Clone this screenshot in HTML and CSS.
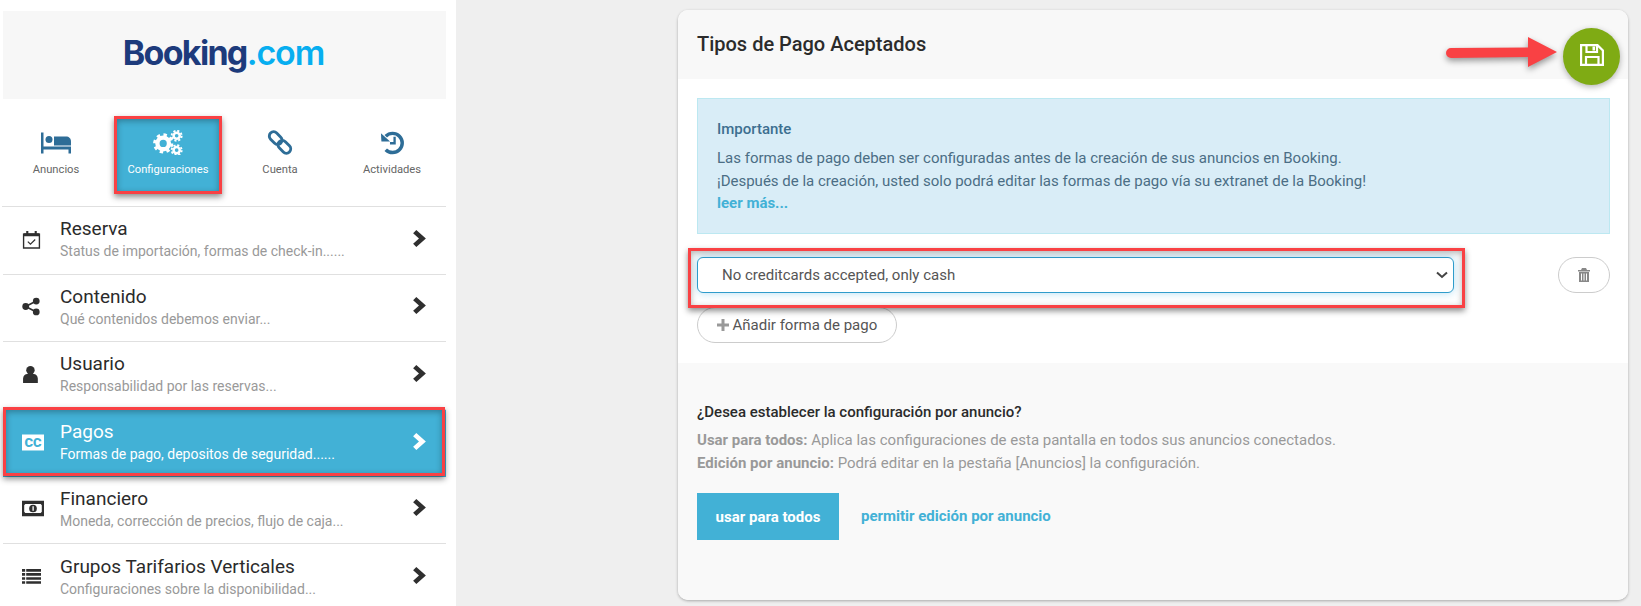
FILE: index.html
```html
<!DOCTYPE html>
<html>
<head>
    <meta charset="utf-8">
    <title>Tipos de Pago</title>
    <link rel="stylesheet" href="styles.css">
</head>
<body>
<div class="page">
    <aside class="sidebar">
        <div class="logo-box">
            <span class="logo"><span class="logo-dark">Booking</span><span class="logo-light">.com</span></span>
        </div>
        <div class="tabs">
            <div class="tab">
                <svg class="tab-icon" viewBox="0 0 32 24"><path d="M1 2h2.500v14H31v7h-2.500v-4H3.500v4H1z"/><circle cx="9" cy="9" r="3.500"/><path d="M14 6h12c3 0 5 2 5 5v4H14z"/></svg>
                <span>Anuncios</span>
            </div>
            <div class="tab tab-active">
                <svg class="tab-icon" viewBox="0 0 32 26"><g fill="none" stroke="currentColor"><circle cx="11" cy="14" r="6" stroke-width="4.500"/><circle cx="11" cy="14" r="9" stroke-width="3" stroke-dasharray="3.500 3.570"/><circle cx="25" cy="6" r="3.200" stroke-width="2.600"/><circle cx="25" cy="6" r="5.200" stroke-width="2" stroke-dasharray="2.200 1.880"/><circle cx="25" cy="21" r="3.200" stroke-width="2.600"/><circle cx="25" cy="21" r="5.200" stroke-width="2" stroke-dasharray="2.200 1.880"/></g></svg>
                <span>Configuraciones</span>
            </div>
            <div class="tab">
                <svg class="tab-icon" viewBox="0 0 26 26"><g fill="none" stroke="currentColor" stroke-width="3"><rect x="1" y="4" width="15" height="9" rx="4.500" transform="rotate(45 8.500 8.500)"/><rect x="10" y="13" width="15" height="9" rx="4.500" transform="rotate(45 17.500 17.500)"/></g></svg>
                <span>Cuenta</span>
            </div>
            <div class="tab">
                <svg class="tab-icon" viewBox="0 0 26 26"><path d="M6.500 6.500A10 10 0 1 1 6.500 20.500" fill="none" stroke="currentColor" stroke-width="3.600"/><path d="M1.500 3.500 11 12H2z"/><path d="M14.500 7h2.400v8h-6v-2.400h3.600z"/></svg>
                <span>Actividades</span>
            </div>
        </div>
        <div class="menu">
            <div class="menu-row">
                <svg class="menu-icon" viewBox="0 0 18 18"><path d="M1.500 4h15v13h-15z" fill="none" stroke="currentColor" stroke-width="1.300"/><path d="M1.500 3h15v3h-15zM4 1h2v3H4zM12 1h2v3h-2z"/><path d="M5.500 11l2.500 2.500 4.500-4.500" fill="none" stroke="currentColor" stroke-width="1.100"/></svg>
                <div class="menu-text">
                    <div class="menu-title">Reserva</div>
                    <div class="menu-sub">Status de importación, formas de check-in......</div>
                </div>
                <svg class="chevron" viewBox="0 0 12 16"><path d="M3 0l9 8-9 8-3-3 5.500-5L0 3z"/></svg>
            </div>
            <div class="menu-row">
                <svg class="menu-icon" viewBox="0 0 18 18"><circle cx="3.500" cy="9" r="3.200"/><circle cx="13.500" cy="3.800" r="3.200"/><circle cx="13.500" cy="14.200" r="3.200"/><path d="M3.500 9l10-5.200M3.500 9l10 5.200" stroke="currentColor" stroke-width="1.500"/></svg>
                <div class="menu-text">
                    <div class="menu-title">Contenido</div>
                    <div class="menu-sub">Qué contenidos debemos enviar...</div>
                </div>
                <svg class="chevron" viewBox="0 0 12 16"><path d="M3 0l9 8-9 8-3-3 5.500-5L0 3z"/></svg>
            </div>
            <div class="menu-row">
                <svg class="menu-icon" viewBox="0 0 18 18"><circle cx="8" cy="5" r="4"/><path d="M1 17v-4c0-3 2-4.500 4-4.500h6c2 0 4 1.500 4 4.500v4z"/></svg>
                <div class="menu-text">
                    <div class="menu-title">Usuario</div>
                    <div class="menu-sub">Responsabilidad por las reservas...</div>
                </div>
                <svg class="chevron" viewBox="0 0 12 16"><path d="M3 0l9 8-9 8-3-3 5.500-5L0 3z"/></svg>
            </div>
            <div class="menu-row menu-row-active">
                <svg class="menu-icon menu-icon-wide" viewBox="0 0 22 16"><path d="M0 0h22v16H0z"/><text x="11" y="12.500" text-anchor="middle" class="cc-text">CC</text></svg>
                <div class="menu-text">
                    <div class="menu-title">Pagos</div>
                    <div class="menu-sub">Formas de pago, depositos de seguridad......</div>
                </div>
                <svg class="chevron" viewBox="0 0 12 16"><path d="M3 0l9 8-9 8-3-3 5.500-5L0 3z"/></svg>
            </div>
            <div class="menu-row">
                <svg class="menu-icon menu-icon-wide" viewBox="0 0 20 14"><path fill-rule="evenodd" d="M0 0h20v14H0zM3 3 2 4v6l1 1h14l1-1V4l-1-1z"/><circle cx="10" cy="7" r="3.500"/><path d="M9.500 5h1.200v4H9.500z" fill="#fff"/></svg>
                <div class="menu-text">
                    <div class="menu-title">Financiero</div>
                    <div class="menu-sub">Moneda, corrección de precios, flujo de caja...</div>
                </div>
                <svg class="chevron" viewBox="0 0 12 16"><path d="M3 0l9 8-9 8-3-3 5.500-5L0 3z"/></svg>
            </div>
            <div class="menu-row">
                <svg class="menu-icon" viewBox="0 0 18 14"><path d="M0 0h3v2.400H0zM4 0h14v2.400H4zM0 3.800h3v2.400H0zM4 3.800h14v2.400H4zM0 7.600h3V10H0zM4 7.600h14V10H4zM0 11.400h3v2.400H0zM4 11.400h14v2.400H4z"/></svg>
                <div class="menu-text">
                    <div class="menu-title">Grupos Tarifarios Verticales</div>
                    <div class="menu-sub">Configuraciones sobre la disponibilidad...</div>
                </div>
                <svg class="chevron" viewBox="0 0 12 16"><path d="M3 0l9 8-9 8-3-3 5.500-5L0 3z"/></svg>
            </div>
        </div>
    </aside>

    <main class="main">
        <section class="card">
            <header class="card-head">
                <h1>Tipos de Pago Aceptados</h1>
            </header>
            <div class="card-body">
                <div class="alert">
                    <div class="alert-title">Importante</div>
                    <div>Las formas de pago deben ser configuradas antes de la creación de sus anuncios en Booking.</div>
                    <div>¡Después de la creación, usted solo podrá editar las formas de pago vía su extranet de la Booking!</div>
                    <div class="alert-link">leer más...</div>
                </div>
                <div class="select-row">
                    <div class="select-wrap">
                        <select class="select">
                            <option>No creditcards accepted, only cash</option>
                        </select>
                        <svg class="select-arrow" viewBox="0 0 12 8"><path d="M1 1.500 6 6l5-4.500" fill="none" stroke="currentColor" stroke-width="2"/></svg>
                    </div>
                    <button class="btn-round btn-delete">
                        <svg class="trash" viewBox="0 0 12 14"><path d="M0 2h12v1.500H0zM4 0h4l1 2H3z"/><path fill-rule="evenodd" d="M1 4h10v10H1zM3 5.500v7h1v-7zM5.500 5.500v7h1v-7zM8 5.500v7h1v-7z"/></svg>
                    </button>
                </div>
                <button class="btn-round btn-add">
                    <svg class="plus" viewBox="0 0 12 12"><path d="M4.500 0h3v4.500H12v3H7.500V12h-3V7.500H0v-3h4.500z"/></svg>
                    Añadir forma de pago
                </button>
            </div>
            <div class="card-foot">
                <div class="foot-title">¿Desea establecer la configuración por anuncio?</div>
                <div class="foot-line"><b>Usar para todos:</b> Aplica las configuraciones de esta pantalla en todos sus anuncios conectados.</div>
                <div class="foot-line"><b>Edición por anuncio:</b> Podrá editar en la pestaña [Anuncios] la configuración.</div>
                <div class="foot-actions">
                    <button class="btn-primary">usar para todos</button>
                    <span class="foot-link">permitir edición por anuncio</span>
                </div>
            </div>
        </section>
    </main>
</div>

<!-- save button and red annotations sit over the page -->
<button class="btn-save">
    <svg viewBox="0 0 24 22"><g fill="none" stroke="white" stroke-width="2.200"><path d="M1.100 1.100H17.500L22.900 6.500V20.900H1.100z"/><path d="M6.500 1.100V8H17V1.100"/><path d="M6 20.900V13H18.500V20.900"/></g><path d="M12.500 2.500h2.500v4h-2.500z" fill="white"/></svg>
</button>
<div class="mark mark-tab"></div>
<div class="mark mark-row"></div>
<div class="mark mark-select"></div>
<svg class="arrow" viewBox="0 0 111 30"><path d="M5 11 82 10.500V0L111 15 82 30V20L5 21a5 5 0 0 1 0-10z"/></svg>
</body>
</html>
```

FILE: styles.css
```css
* {
    box-sizing: border-box;
}
html, body {
    margin: 0;
    height: 100%;
    overflow: hidden;
}
body {
    font-family: Roboto, "Liberation Sans", sans-serif;
    background-color: #efefef;
    color: #222;
    position: relative;
}
.page {
    display: flex;
    height: 606px;
}

/* sidebar */
.sidebar {
    width: 456px;
    padding: 11px 10px 0 3px;
    background-color: white;
    flex-shrink: 0;
}
.logo-box {
    height: 88px;
    background-color: #f7f7f7;
    display: flex;
    align-items: center;
    justify-content: center;
    padding: 0 2px 5px 0;
}
.logo {
    font-family: Inter, sans-serif;
    font-weight: 700;
    font-size: 34px;
    letter-spacing: -1.100px;
}
.logo-dark {
    color: #1d3b7c;
    letter-spacing: -1.700px;
}
.logo-light {
    color: #07aef0;
    font-weight: 600;
}
.tabs {
    display: flex;
    gap: 4px;
    margin-left: -1px;
    padding-top: 17px;
    height: 108px;
    border-bottom: 1px solid #e0e0e0;
}
.tab {
    width: 108px;
    height: 78px;
    display: flex;
    flex-direction: column;
    align-items: center;
    padding-top: 14px;
    font-size: 11.200px;
    color: #666;
}
.tab span {
    margin-top: 8px;
}
.tab-icon {
    width: 32px;
    height: 25px;
    fill: #2e6d97;
    color: #2e6d97;
}
.tab-active {
    background-color: #42b1d6;
    color: white;
}
.tab-active .tab-icon {
    fill: white;
    color: white;
}
.menu-row {
    height: 67.500px;
    display: flex;
    align-items: center;
    padding: 0 20px 2px 19px;
    border-bottom: 1px solid #e0e0e0;
}
.menu-row:last-child {
    border-bottom: none;
}
.menu-icon {
    width: 19px;
    height: 19px;
    margin-right: 19px;
    fill: #2f2f2f;
    color: #2f2f2f;
    flex-shrink: 0;
}
.menu-icon-wide {
    width: 22px;
    margin-right: 16px;
}
.menu-text {
    flex: 1;
}
.menu-title {
    font-size: 19px;
    line-height: 22px;
    color: #2b2b2b;
}
.menu-sub {
    font-size: 14px;
    line-height: 18px;
    margin-top: 2px;
    color: #999;
}
.chevron {
    width: 13px;
    height: 17px;
    margin-top: -2px;
    fill: #2f2f2f;
}
.menu-row-active {
    height: 67px;
    background-color: #42b1d6;
    border-bottom: none;
}
.menu-row-active .menu-title,
.menu-row-active .menu-sub {
    color: white;
}
.menu-row-active .menu-icon,
.menu-row-active .chevron {
    fill: white;
    color: white;
}
.cc-text {
    font-family: Roboto, sans-serif;
    font-size: 13px;
    font-weight: 900;
    fill: #42b1d6;
}

/* card */
.main {
    flex: 1;
    padding: 10px 13px 6px 222px;
}
.card {
    height: 590px;
    background-color: white;
    border-radius: 10px;
    box-shadow: 0 1px 3px rgba(0,0,0,0.3);
    overflow: hidden;
    display: flex;
    flex-direction: column;
}
.card-head {
    height: 69px;
    background-color: #f8f8f8;
    padding: 23px 19px;
}
.card-head h1 {
    margin: 0;
    font-size: 20px;
    line-height: 22px;
    font-weight: 500;
    color: #2b2b2b;
}
.card-body {
    height: 284px;
    padding: 19px 18px 0 19px;
}
.alert {
    height: 136px;
    padding: 20px 19px 0;
    background-color: #d9edf7;
    border: 1px solid #bce8f1;
    color: #4b6e85;
    font-size: 15px;
    line-height: 22.500px;
}
.alert-title {
    font-weight: 500;
    color: #3d6f90;
    margin-bottom: 8px;
    line-height: 20px;
}
.alert-link {
    font-weight: 700;
    color: #42b1d6;
}
.select-row {
    display: flex;
    justify-content: space-between;
    margin-top: 23px;
}
.select-wrap {
    position: relative;
    width: 757px;
}
.select {
    width: 100%;
    height: 36px;
    padding: 0 24px;
    appearance: none;
    background-color: white;
    border: 1px solid #2f9ccb;
    border-radius: 6px;
    box-shadow: 0 0 8px rgba(102,190,233,0.5);
    font-family: inherit;
    font-size: 15px;
    color: #555;
    outline: none;
}
.select-arrow {
    position: absolute;
    right: 6px;
    top: 14px;
    width: 12px;
    height: 8px;
    color: #444;
}
.btn-round {
    height: 36px;
    background-color: white;
    border: 1px solid #ccc;
    border-radius: 18px;
    font-family: inherit;
    font-size: 15px;
    color: #555;
}
.btn-delete {
    width: 52px;
    display: flex;
    align-items: center;
    justify-content: center;
    padding: 0;
}
.trash {
    width: 12px;
    height: 14px;
    fill: #888;
}
.btn-add {
    display: block;
    width: 200px;
    margin-top: 14px;
    padding: 0;
}
.plus {
    width: 12px;
    height: 12px;
    fill: #999;
    vertical-align: -1px;
}
.card-foot {
    flex: 1;
    background-color: #f9f9f9;
    padding: 38px 19px 0;
    font-size: 15px;
    line-height: 23px;
    color: #999;
}
.foot-title {
    font-weight: 500;
    color: #2b2b2b;
    margin-bottom: 5px;
}
.foot-line b {
    font-weight: 700;
}
.foot-actions {
    display: flex;
    align-items: center;
    margin-top: 18px;
}
.btn-primary {
    width: 142px;
    height: 47px;
    border: none;
    background-color: #42b1d6;
    color: white;
    font-family: inherit;
    font-size: 15px;
    font-weight: 700;
}
.foot-link {
    margin-left: 22px;
    font-weight: 700;
    color: #42b1d6;
}

/* overlays */
.btn-save {
    position: absolute;
    left: 1563px;
    top: 28px;
    width: 57px;
    height: 57px;
    padding: 0 0 4px;
    border: none;
    border-radius: 50%;
    background-color: #7fab14;
    box-shadow: 0 2px 6px rgba(0,0,0,0.3);
    display: flex;
    align-items: center;
    justify-content: center;
}
.btn-save svg {
    width: 24px;
    height: 22px;
}
.mark {
    position: absolute;
    border: 3px solid #f94144;
    box-shadow: 0 3px 6px rgba(0,0,0,0.45), inset 0 2px 6px rgba(0,0,0,0.3);
}
.mark-tab {
    left: 114px;
    top: 116px;
    width: 108px;
    height: 78px;
}
.mark-row {
    left: 3px;
    top: 407px;
    width: 442px;
    height: 69px;
}
.mark-select {
    left: 688px;
    top: 248px;
    width: 777px;
    height: 60px;
}
.arrow {
    position: absolute;
    left: 1446px;
    top: 37px;
    width: 111px;
    height: 30px;
    fill: #f94144;
    filter: drop-shadow(0 3px 3px rgba(0,0,0,0.4));
}
```
